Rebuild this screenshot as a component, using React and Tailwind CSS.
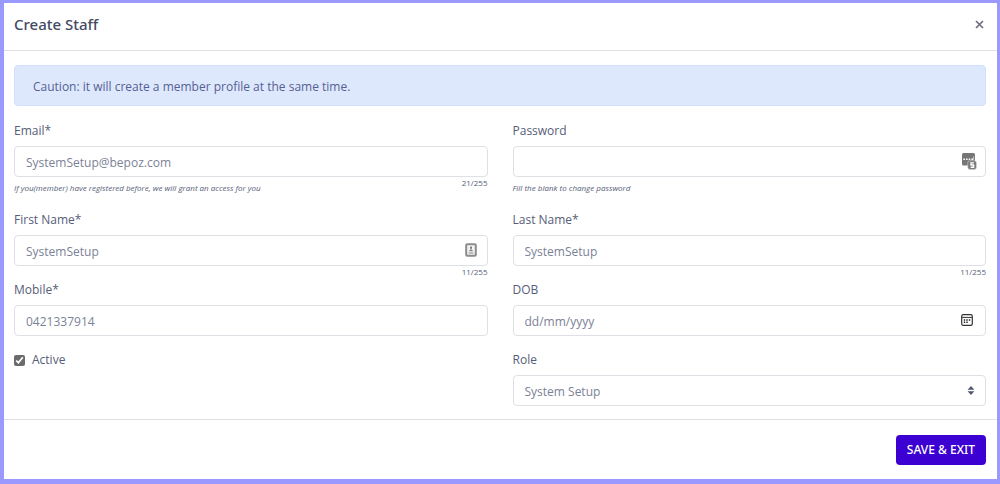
import React from "react";

const box =
  "block h-[31px] w-full rounded border border-[#dfe0e6] bg-white px-[11px] pt-0.5 text-[12px] text-[#7b8296] placeholder:text-[#7b8296] outline-none focus:border-[#9999ff]";

function Field({ id, label, help, count, icon, children, ...props }) {
  return (
    <div>
      <label htmlFor={id} className="mb-[5px] block leading-5">
        {label}
      </label>
      <div className="relative">
        {children || <input id={id} className={box} {...props} />}
        {icon}
      </div>
      {(help || count) && (
        <div className="flex items-start justify-between text-[8px] leading-3">
          <em className="pt-[5px]">{help}</em>
          <span>{count}</span>
        </div>
      )}
    </div>
  );
}

function PasswordIcon() {
  return (
    <svg className="pointer-events-none absolute top-[7px] right-[9px]" width="16" height="17" viewBox="0 0 16 17" aria-hidden="true">
      <rect x="1" y="0" width="13" height="12.5" rx="1.5" fill="#767676" />
      <path d="M2.3 6.2h1.6M5 6.2h1.6M7.7 6.2h1.6M10.4 6.2h1.6" stroke="#fff" strokeWidth="1.5" />
      <path d="M12.6 3.4v3.4" stroke="#e4e4e4" strokeWidth="0.8" />
      <rect x="6.8" y="7.8" width="8.6" height="8.6" rx="2" fill="#767676" stroke="#d8d8d8" strokeWidth="0.6" />
      <path d="M13 9.9h-3v2.1h2.6v2.2H9.6" fill="none" stroke="#fff" strokeWidth="1.4" />
    </svg>
  );
}

function ContactIcon() {
  return (
    <svg className="pointer-events-none absolute top-2 right-[11px]" width="12" height="14" viewBox="0 0 12 14" aria-hidden="true">
      <rect x="1.2" y="1.2" width="9.6" height="11.6" rx="1" fill="#f4f4f4" stroke="#8c8c8c" strokeWidth="2" />
      <circle cx="6" cy="4.7" r="1.1" fill="#777" />
      <path d="M6 5v3M4.3 7.6h3.4M3.6 10h4.8" stroke="#888" strokeWidth="1.1" />
    </svg>
  );
}

function CalendarIcon() {
  return (
    <svg className="pointer-events-none absolute top-[9px] right-[13px]" width="12" height="12" viewBox="0 0 12 12" aria-hidden="true">
      <rect x="0.7" y="0.7" width="10.6" height="10.6" rx="1.6" fill="none" stroke="#333" strokeWidth="1.2" />
      <path d="M1 3.4h10" stroke="#333" strokeWidth="1" />
      <path d="M2.8 6h1.4M5.3 6h1.4M7.8 6h1.4M2.8 8.3h1.4M5.3 8.3h1.4" stroke="#222" strokeWidth="1.4" />
    </svg>
  );
}

function SortIcon() {
  return (
    <svg className="pointer-events-none absolute top-[11px] right-[11px]" width="8" height="9" viewBox="0 0 8 9" aria-hidden="true">
      <path d="M4 0 7.4 3.7H.6zM4 9 .6 5.3h6.8z" fill="#4f5870" />
    </svg>
  );
}

export default function App() {
  return (
    <div className="min-h-screen bg-[#9999ff] pt-[3px] pr-[3px] pb-[5px] pl-1 font-['Open_Sans','Noto_Sans',sans-serif] text-[12px] text-[#565d78]">
      <form className="bg-white" onSubmit={(e) => e.preventDefault()}>
        <header className="flex h-12 items-center justify-between border-b border-[#dfe0e6] pr-3 pb-1 pl-2.5">
          <h1 className="font-['Noto_Sans',sans-serif] text-[15px] font-medium text-[#434a63]">Create Staff</h1>
          <button type="button" aria-label="Close" className="flex size-3 items-center justify-center text-[#6c6f80]">
            <svg width="9" height="9" viewBox="0 0 9 9" aria-hidden="true">
              <path d="M1 1l7 7M8 1 1 8" stroke="currentColor" strokeWidth="1.7" />
            </svg>
          </button>
        </header>

        <main className="pt-[14px] pr-[11px] pb-[13px] pl-2.5">
          <div role="alert" className="mb-[15px] rounded border border-[#d0e0fc] bg-[#dde8fc] px-[18px] pt-[10px] pb-[8px] leading-[21px] text-[#565f93]">
            Caution: it will create a member profile at the same time.
          </div>

          <div className="grid grid-cols-2 gap-x-[25px]">
            <div className="h-[89px]">
              <Field
                id="email"
                type="email"
                label="Email*"
                defaultValue="SystemSetup@bepoz.com"
                help="If you(member) have registered before, we will grant an access for you"
                count="21/255"
              />
            </div>
            <div className="h-[89px]">
              <Field id="password" type="password" label="Password" help="Fill the blank to change password" icon={<PasswordIcon />} />
            </div>
            <div className="h-[70px]">
              <Field id="first" type="text" label="First Name*" defaultValue="SystemSetup" count="11/255" icon={<ContactIcon />} />
            </div>
            <div className="h-[70px]">
              <Field id="last" type="text" label="Last Name*" defaultValue="SystemSetup" count="11/255" />
            </div>
            <div className="h-[70px]">
              <Field id="mobile" type="tel" label="Mobile*" defaultValue="0421337914" />
            </div>
            <div className="h-[70px]">
              <Field id="dob" type="text" label="DOB" placeholder="dd/mm/yyyy" icon={<CalendarIcon />} />
            </div>
            <div>
              <label className="flex items-center gap-[7px] leading-5">
                <input type="checkbox" defaultChecked className="size-[11px] accent-[#6b6b6b]" />
                Active
              </label>
            </div>
            <Field id="role" label="Role" icon={<SortIcon />}>
              <select id="role" className={`${box} appearance-none`} defaultValue="System Setup">
                <option>System Setup</option>
              </select>
            </Field>
          </div>
        </main>

        <footer className="flex justify-end border-t border-[#dfe0e6] pt-[15px] pr-[11px] pb-[14px]">
          <button type="submit" className="h-[30px] rounded bg-[#3c00d2] px-[11px] font-['Noto_Sans',sans-serif] text-[12px] font-medium text-white">
            SAVE &amp; EXIT
          </button>
        </footer>
      </form>
    </div>
  );
}
